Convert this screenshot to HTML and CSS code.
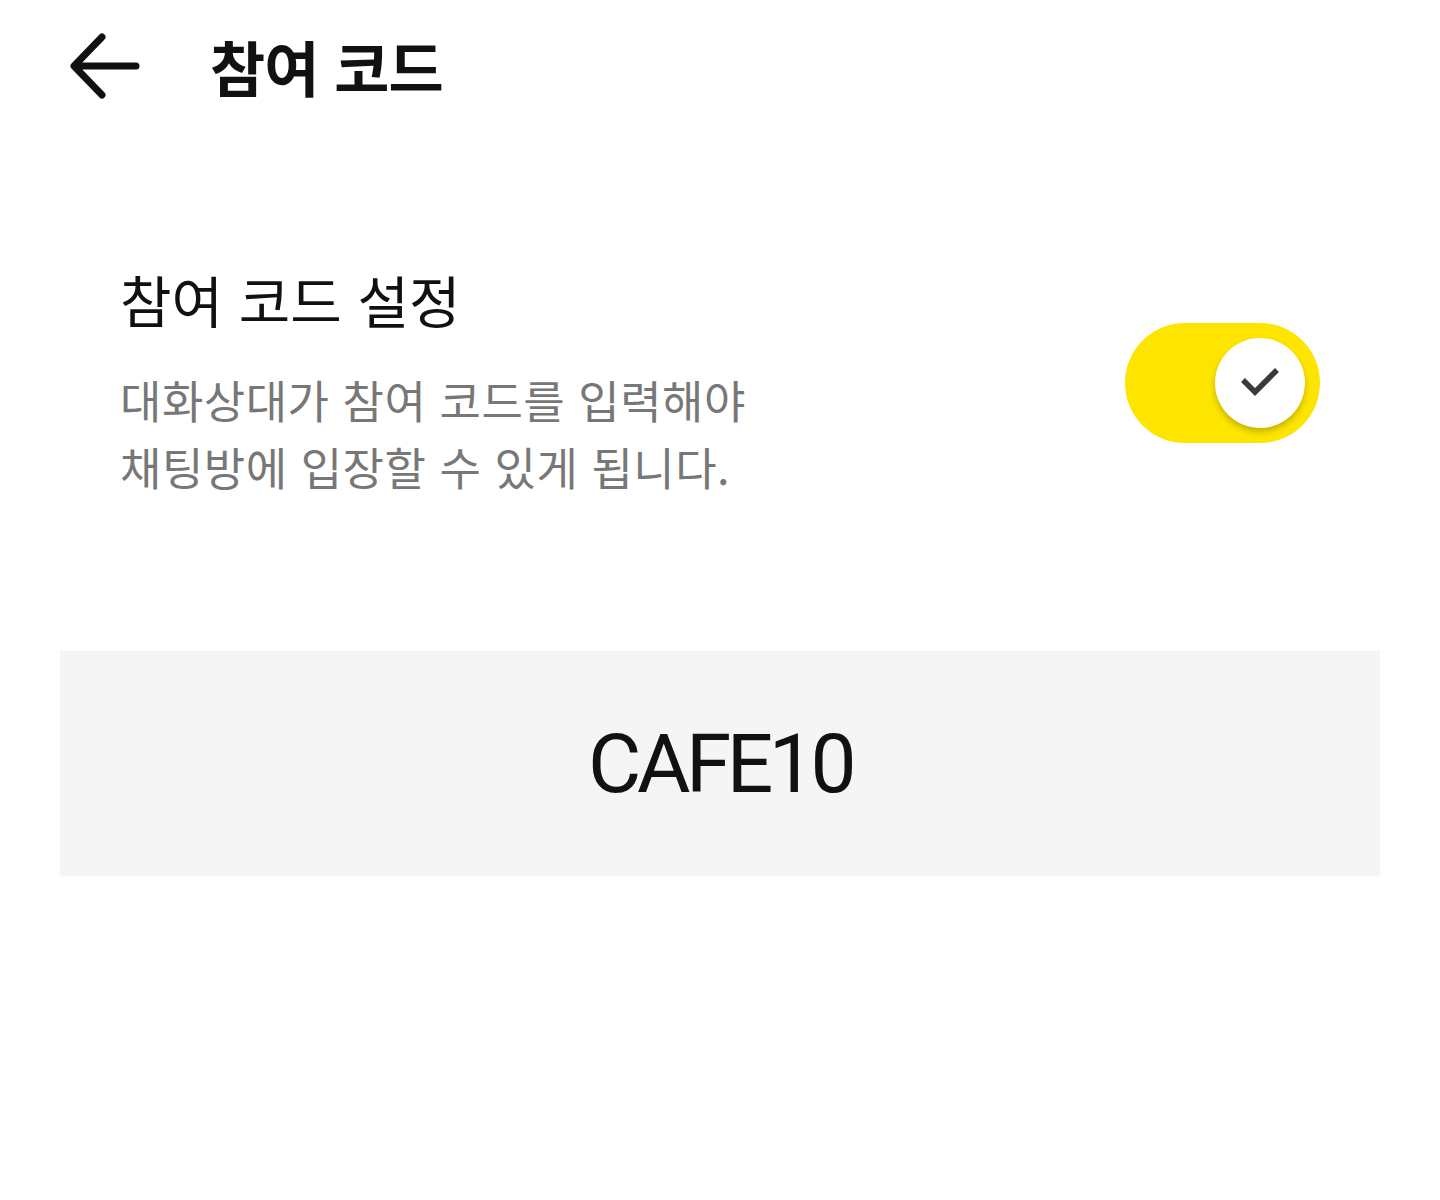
FILE: index.html
```html
<!DOCTYPE html>
<html lang="ko">
<head>
  <meta charset="UTF-8" />
  <meta name="viewport" content="width=device-width, initial-scale=1.0"/>
  <title>참여 코드</title>
  <link rel="stylesheet" href="styles.css">
</head>
<body>

  <header class="topbar">
    <button class="back" aria-label="뒤로">
      <svg width="74" height="68" viewBox="0 0 74 68">
        <path d="M67 34 H6 M33 5 L5 34 L33 63" fill="none" stroke="#111" stroke-width="7" stroke-linecap="round" stroke-linejoin="round"/>
      </svg>
    </button>
    <h1 class="title">참여 코드</h1>
  </header>

  <section class="setting">
    <div class="setting-text">
      <div class="setting-name">참여 코드 설정</div>
      <p class="setting-desc">대화상대가 참여 코드를 입력해야<br>채팅방에 입장할 수 있게 됩니다.</p>
    </div>
    <div class="toggle on">
      <div class="knob">
        <svg width="40" height="30" viewBox="0 0 40 30">
          <path d="M3 12 L15 24 L37 2" fill="none" stroke="#3a3a3a" stroke-width="5.5"/>
        </svg>
      </div>
    </div>
  </section>

  <div class="code-box">CAFE10</div>

</body>
</html>
```

FILE: styles.css
```css
* {
  box-sizing: border-box;
}
body {
  margin: 0;
  background: #fff;
  font-family: "Noto Sans CJK KR", "Noto Sans", sans-serif;
  color: #111;
}
.topbar {
  display: flex;
  align-items: center;
  height: 132px;
  padding-left: 69px;
}
.back {
  border: 0;
  background: none;
  padding: 0;
  display: flex;
  cursor: pointer;
}
.title {
  margin: 0 0 0 67px;
  font-size: 60px;
  font-weight: 700;
  letter-spacing: -1px;
  line-height: 1;
}
.setting {
  display: flex;
  align-items: center;
  justify-content: space-between;
  margin-top: 134px;
  padding: 0 120px;
}
.setting-name {
  font-size: 56px;
  line-height: 66px;
  color: #111;
}
.setting-desc {
  margin: 34px 0 0;
  font-size: 45px;
  line-height: 67px;
  letter-spacing: 0.5px;
  color: #777;
}
.toggle {
  width: 195px;
  height: 120px;
  border-radius: 60px;
  background: #fee500;
  display: flex;
  align-items: center;
  justify-content: flex-end;
  padding-right: 15px;
}
.knob {
  width: 90px;
  height: 90px;
  border-radius: 50%;
  background: #fff;
  box-shadow: 0 4px 6px rgba(0,0,0,0.22);
  display: flex;
  align-items: center;
  justify-content: center;
}
.code-box {
  margin: 151px 60px 0;
  height: 225px;
  background: #f5f5f5;
  display: flex;
  align-items: center;
  justify-content: center;
  font-family: Roboto, "Liberation Sans", sans-serif;
  font-size: 82px;
  letter-spacing: -4.5px;
  color: #111;
}
```
